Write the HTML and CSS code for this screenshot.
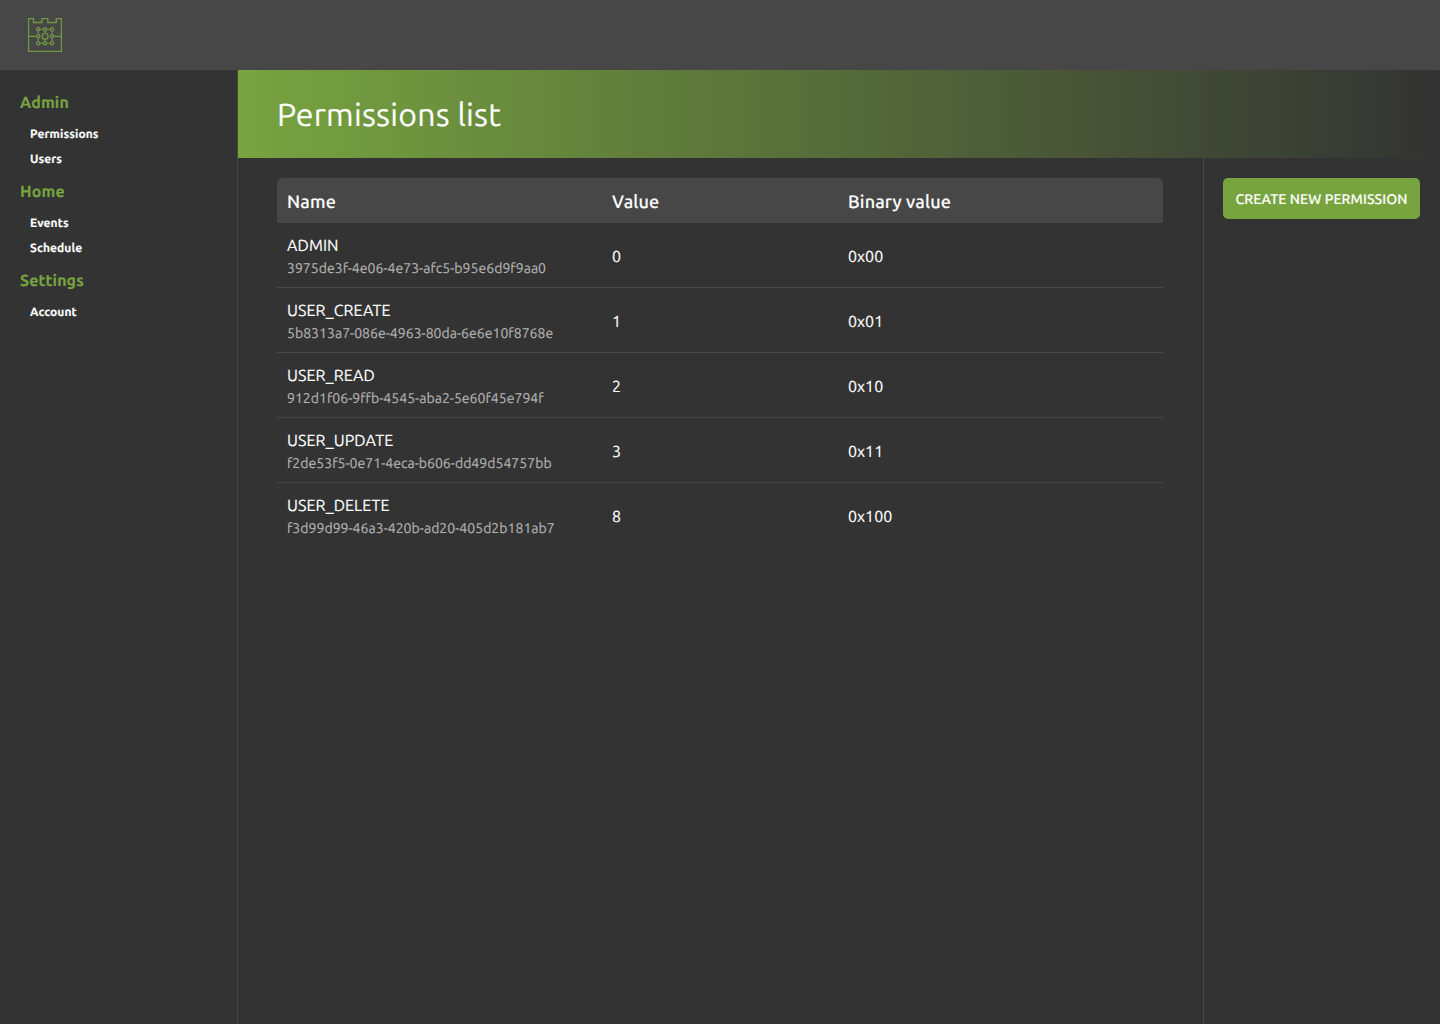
FILE: index.html
```html
<!DOCTYPE html>
<html lang="en">
<head>
<meta charset="utf-8">
<title>Permissions list</title>
<link rel="stylesheet" href="styles.css">
</head>
<body>
<header class="topbar">
  <svg class="logo" viewBox="0 0 36 36" width="36" height="36" fill="none" stroke="#78a440" stroke-width="1.3" stroke-opacity=".85">
    <path d="M1.600 1.600H6.500V5.500H14.800V1.600H20.800V5.500H29.300V1.600H34.400V34.400H1.600Z"/>
    <path d="M1.600 19.300H9.500M26.700 19.300H34.400"/>
    <path stroke-width="1" d="M13 12.300H16.300M19.700 12.300H23.300M13 26.300H16.300M19.700 26.300H23.300M11.300 14V17.600M11.300 21V24.600M25 14V17.600M25 21V24.600M18 14V16.300M18 22.300V24.600"/>
    <circle cx="18.100" cy="19.300" r="3"/>
    <circle cx="11.200" cy="12.300" r="1.600"/><circle cx="18" cy="12.300" r="1.600"/><circle cx="25" cy="12.300" r="1.600"/>
    <circle cx="11.200" cy="19.300" r="1.600"/><circle cx="25" cy="19.300" r="1.600"/>
    <circle cx="11.200" cy="26.300" r="1.600"/><circle cx="18" cy="26.300" r="1.600"/><circle cx="25" cy="26.300" r="1.600"/>
  </svg>
</header>
<div class="layout">
  <nav class="sidebar">
    <h2 class="group">Admin</h2>
    <a class="link">Permissions</a>
    <a class="link">Users</a>
    <h2 class="group">Home</h2>
    <a class="link">Events</a>
    <a class="link">Schedule</a>
    <h2 class="group">Settings</h2>
    <a class="link">Account</a>
  </nav>
  <main class="main">
    <div class="banner"><h1 class="title">Permissions list</h1></div>
    <div class="content">
      <section class="listing">
        <div class="row head"><span>Name</span><span>Value</span><span>Binary value</span></div>
        <div class="row"><div><div class="name">ADMIN</div><div class="uuid">3975de3f-4e06-4e73-afc5-b95e6d9f9aa0</div></div><span>0</span><span>0x00</span></div>
        <div class="row"><div><div class="name">USER_CREATE</div><div class="uuid">5b8313a7-086e-4963-80da-6e6e10f8768e</div></div><span>1</span><span>0x01</span></div>
        <div class="row"><div><div class="name">USER_READ</div><div class="uuid">912d1f06-9ffb-4545-aba2-5e60f45e794f</div></div><span>2</span><span>0x10</span></div>
        <div class="row"><div><div class="name">USER_UPDATE</div><div class="uuid">f2de53f5-0e71-4eca-b606-dd49d54757bb</div></div><span>3</span><span>0x11</span></div>
        <div class="row"><div><div class="name">USER_DELETE</div><div class="uuid">f3d99d99-46a3-420b-ad20-405d2b181ab7</div></div><span>8</span><span>0x100</span></div>
      </section>
      <aside class="actions"><button class="create">CREATE NEW PERMISSION</button></aside>
    </div>
  </main>
</div>
</body>
</html>
```
FILE: styles.css
```css
* { box-sizing: border-box; }
body {
  margin: 0;
  height: 1024px;
  display: flex;
  flex-direction: column;
  background: #333;
  color: #fff;
  font: 16px/24px Ubuntu, "Noto Sans", sans-serif;
  text-rendering: geometricPrecision;
  -webkit-text-stroke: 0.15px;
}
.topbar {
  height: 70px;
  display: flex;
  align-items: center;
  padding-left: 27px;
  background: #474747;
}
.logo { display: block; }
.layout { flex: 1; display: flex; }
.sidebar {
  width: 238px;
  padding: 21px 20px;
  border-right: 1px solid #474747;
}
.group {
  margin: 0 0 7px;
  font-size: 16px;
  line-height: 25px;
  font-weight: 700;
  letter-spacing: 0.12px;
  color: #78a440;
}
.link {
  display: block;
  height: 25px;
  padding-left: 10px;
  font-size: 12px;
  line-height: 24px;
  font-weight: 700;
  letter-spacing: 0.1px;
}
.link + .group { margin-top: 7px; }
.main { flex: 1; display: flex; flex-direction: column; }
.banner {
  height: 88px;
  padding: 2px 39px 0;
  display: flex;
  align-items: center;
  background: linear-gradient(90deg, #78a440, #333);
}
.title { margin: 0; font-size: 32px; line-height: 40px; font-weight: 400; letter-spacing: 0.25px; }
.content { flex: 1; display: flex; }
.listing { flex: 1; padding: 20px 40px 20px 39px; }
.row {
  display: grid;
  grid-template-columns: 325px 236px 1fr;
  align-items: center;
  height: 65px;
  padding: 3px 10px 0;
  border-bottom: 1px solid #474747;
}
.row:last-child { border-bottom-color: transparent; }
.head {
  height: 45px;
  padding-top: 4px;
  background: #474747;
  border-radius: 5px 5px 0 0;
  font-size: 18px;
  font-weight: 500;
  letter-spacing: 0.17px;
}
.name { padding-top: 1px; line-height: 23px; letter-spacing: 0.1px; }
.uuid { margin-top: -1px; font-size: 14px; line-height: 22px; letter-spacing: 0.04px; color: #b3b3b3; }
.actions {
  width: 237px;
  padding: 20px 20px 20px 19px;
  border-left: 1px solid #474747;
}
.create {
  width: 100%;
  height: 41px;
  padding: 0;
  border: 0;
  border-radius: 5px;
  background: #78a440;
  color: #fff;
  font: 500 14px/20px Ubuntu, "Noto Sans", sans-serif;
  letter-spacing: 0.09px;
  text-rendering: geometricPrecision;
  white-space: nowrap;
}
```
